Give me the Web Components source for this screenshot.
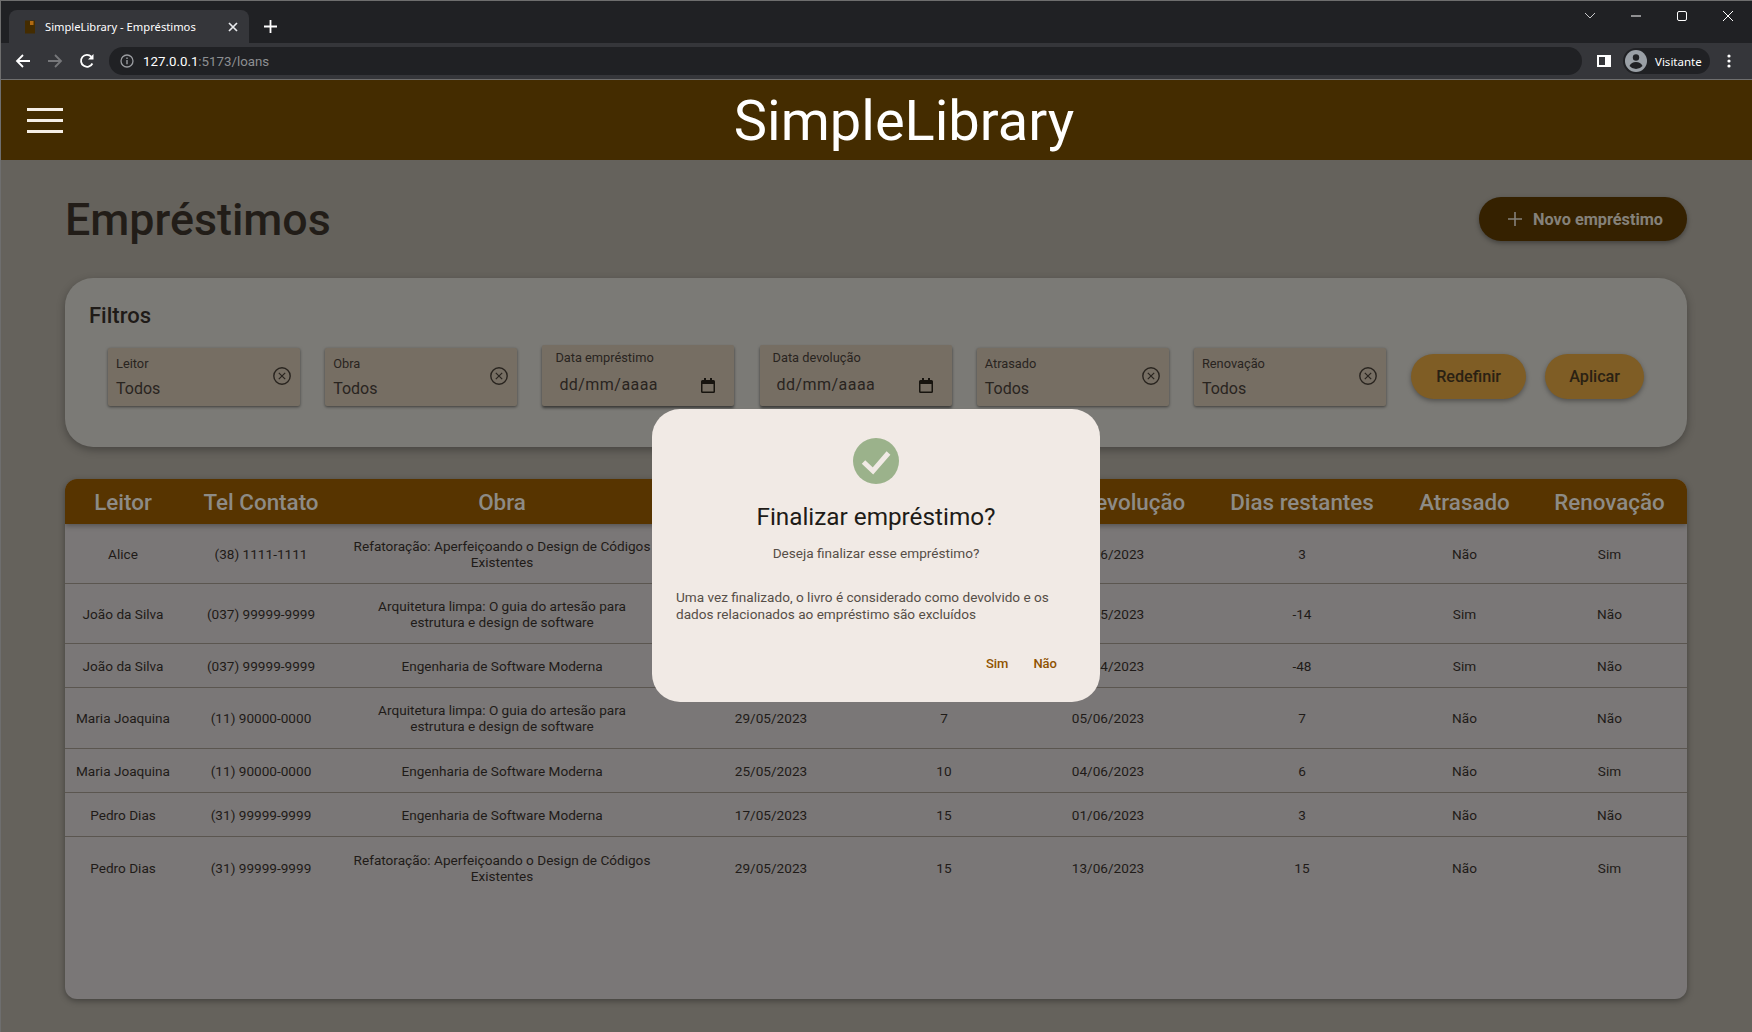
<!DOCTYPE html>
<html lang="pt-BR">
<head>
<meta charset="utf-8">
<title>SimpleLibrary - Empréstimos</title>
<style>
  html, body { margin: 0; height: 100%; }
  body { background: #65625c; font-family: Roboto, "Liberation Sans", sans-serif; overflow: hidden; }
  #app { display: flex; flex-direction: column; height: 1032px; position: relative; border-left: 1px solid #6e6e6e; box-sizing: border-box; }
</style>
</head>
<body>
<div id="app">
  <browser-chrome></browser-chrome>
  <app-header>SimpleLibrary</app-header>
  <loans-page>
    <page-heading slot="heading">Empréstimos</page-heading>
    <pill-button slot="action" kind="primary"><svg slot="icon" width="16" height="16" viewBox="0 0 16 16"><path d="M8 1v14M1 8h14" stroke="#85817a" stroke-width="1.6" fill="none"/></svg>Novo empréstimo</pill-button>
    <filter-card slot="filters">
      <filter-select label="Leitor"></filter-select>
      <filter-select label="Obra"></filter-select>
      <filter-date label="Data empréstimo"></filter-date>
      <filter-date label="Data devolução"></filter-date>
      <filter-select label="Atrasado"></filter-select>
      <filter-select label="Renovação"></filter-select>
      <div style="display:flex;gap:19px;margin-bottom:7px">
        <pill-button kind="tonal" style="width:115px">Redefinir</pill-button>
        <pill-button kind="tonal" style="width:99px">Aplicar</pill-button>
      </div>
    </filter-card>
    <loans-table slot="table"></loans-table>
  </loans-page>
  <confirm-dialog heading="Finalizar empréstimo?" subtitle="Deseja finalizar esse empréstimo?">
    Uma vez finalizado, o livro é considerado como devolvido e os dados relacionados ao empréstimo são excluídos
  </confirm-dialog>
</div>

<script>
class BrowserChrome extends HTMLElement {
    constructor() {
        super();
        this.attachShadow({mode: 'open'});
    }

    connectedCallback() {
        this.shadowRoot.innerHTML = `
        <style>
            :host { display: block; font-family: "Open Sans", "Liberation Sans", sans-serif; color: #fff; flex: none; }
            .strip { height: 42px; background: #202124; border-top: 1px solid #6e6e6e; box-sizing: content-box; display: flex; align-items: flex-end; position: relative; }
            .tab { margin-left: 8px; width: 240px; height: 33px; background: #35363a; border-radius: 8px 8px 0 0; display: flex; align-items: center; box-sizing: border-box; padding-left: 15px; }
            .tab svg.fav { flex: none; }
            .tab .title { margin-left: 9px; font-size: 11.2px; white-space: nowrap; flex: 1; font-family: "Noto Sans", sans-serif; }
            .tab .close { margin-right: 11px; flex: none; }
            .newtab { margin: 0 0 10px 15px; flex: none; }
            .controls { margin-left: auto; margin-right: 1px; align-self: stretch; display: flex; align-items: flex-start; padding-top: 7px; }
            .controls span { width: 46px; height: 16px; display: flex; justify-content: center; }
            .bar { height: 36px; background: #35363a; display: flex; align-items: center; border-bottom: 1px solid #6e6e6e; }
            .nav { width: 32px; display: flex; justify-content: center; flex: none; }
            .omni { margin-left: 6px; width: 1473px; height: 28px; background: #202124; border-radius: 14px; display: flex; align-items: center; padding-left: 11px; box-sizing: border-box; flex: none; }
            .url { margin-left: 9px; font: 13.3px Roboto, sans-serif; color: #8d8f92; }
            .url b { font-weight: 400; color: #fff; }
            .side { margin-left: 15px; flex: none; display: flex; }
            .profile { margin-left: 12px; width: 87px; height: 26px; background: #202124; border-radius: 13px; display: flex; align-items: center; padding-left: 2px; box-sizing: border-box; flex: none; }
            .profile span { margin-left: 8px; font-size: 11.5px; font-family: "Noto Sans", sans-serif; }
            .dots { margin-left: 17px; flex: none; display: flex; }
        </style>
        <div class="strip">
            <div class="tab">
                <svg class="fav" width="12" height="14" viewBox="0 0 12 14"><rect x="1" y="0.5" width="10" height="13" fill="#442c00"/><rect x="6" y="1" width="3.5" height="4" fill="#b06a12"/></svg>
                <div class="title">SimpleLibrary - Empréstimos</div>
                <svg class="close" width="10" height="10" viewBox="0 0 10 10"><path d="M1 1l8 8M9 1l-8 8" stroke="#e8eaed" stroke-width="1.7"/></svg>
            </div>
            <svg class="newtab" width="13" height="13" viewBox="0 0 13 13"><path d="M6.5 0v13M0 6.5h13" stroke="#fff" stroke-width="1.8"/></svg>
            <div class="controls">
                <span><svg width="12" height="16" viewBox="0 0 12 16"><path d="M1 5l5 5 5-5" stroke="#c8c9cb" fill="none"/></svg></span>
                <span><svg width="12" height="16" viewBox="0 0 12 16"><path d="M1 8h10" stroke="#fff" stroke-width="1"/></svg></span>
                <span><svg width="12" height="16" viewBox="0 0 12 16"><rect x="1.5" y="3.5" width="9" height="9" rx="1.5" fill="none" stroke="#fff"/></svg></span>
                <span><svg width="12" height="16" viewBox="0 0 12 16"><path d="M1 3l10 10M11 3L1 13" stroke="#fff"/></svg></span>
            </div>
        </div>
        <div class="bar">
            <div class="nav" style="margin-left:6px"><svg width="16" height="16" viewBox="0 0 16 16"><path d="M15 8H2M8 2L2 8l6 6" fill="none" stroke="#fff" stroke-width="1.8"/></svg></div>
            <div class="nav"><svg width="16" height="16" viewBox="0 0 16 16"><path d="M1 8h13M8 2l6 6-6 6" fill="none" stroke="#76777a" stroke-width="1.8"/></svg></div>
            <div class="nav"><svg width="16" height="16" viewBox="0 0 16 16"><path d="M13.4 10.5A6 6 0 1 1 12.3 3.6" fill="none" stroke="#fff" stroke-width="1.8"/><path d="M14.5 1v5.5H9z" fill="#fff"/></svg></div>
            <div class="omni">
                <svg width="14" height="14" viewBox="0 0 14 14"><circle cx="7" cy="7" r="6" fill="none" stroke="#9a9ca0" stroke-width="1.3"/><path d="M7 6v4.2M7 3.6v1.4" stroke="#9a9ca0" stroke-width="1.4"/></svg>
                <div class="url"><b>127.0.0.1</b>:5173/loans</div>
            </div>
            <div class="side"><svg width="14" height="12" viewBox="0 0 14 12"><rect width="14" height="12" fill="#fff"/><rect x="2" y="2" width="6" height="8" fill="#35363a"/></svg></div>
            <div class="profile">
                <svg width="22" height="22" viewBox="0 0 22 22"><circle cx="11" cy="11" r="11" fill="#9aa0a6"/><circle cx="11" cy="7.5" r="3.2" fill="#202124"/><path d="M4.5 16c1-2.6 3.6-4 6.5-4s5.500 1.400 6.500 4a8.500 8.500 0 0 1-13 0z" fill="#202124"/></svg>
                <span>Visitante</span>
            </div>
            <div class="dots"><svg width="4" height="14" viewBox="0 0 4 14"><circle cx="2" cy="2" r="1.6" fill="#fff"/><circle cx="2" cy="7" r="1.6" fill="#fff"/><circle cx="2" cy="12" r="1.6" fill="#fff"/></svg></div>
        </div>
        `;
    }
}

class AppHeader extends HTMLElement {
    constructor() {
        super();
        this.attachShadow({mode: 'open'});
    }

    connectedCallback() {
        this.shadowRoot.innerHTML = `
        <style>
            :host { display: flex; flex: none; height: 80px; background: #442c00; align-items: center; color: #fff; }
            .menu { margin-left: 26px; width: 36px; display: flex; flex-direction: column; gap: 8px; flex: none; }
            .menu i { display: block; height: 3px; background: #f6efe6; }
            h1 { flex: 1; margin: 0; padding: 2px 7px 0 0; text-align: center; font: 400 56px/78px Roboto, sans-serif; }
        </style>
        <div class="menu"><i></i><i></i><i></i></div>
        <h1><slot></slot></h1>
        `;
    }
}

class LoansPage extends HTMLElement {
    constructor() {
        super();
        this.attachShadow({mode: 'open'});
    }

    connectedCallback() {
        this.shadowRoot.innerHTML = `
        <style>
            :host { display: flex; flex-direction: column; flex: 1; min-height: 0; padding: 37px 65px 33px 64px; box-sizing: border-box; }
            .top { display: flex; justify-content: space-between; align-items: center; height: 44px; margin-bottom: 37px; }
            ::slotted(filter-card) { margin-bottom: 32px; }
            ::slotted(loans-table) { flex: 1; min-height: 0; }
        </style>
        <div class="top"><slot name="heading"></slot><slot name="action"></slot></div>
        <slot name="filters"></slot>
        <slot name="table"></slot>
        `;
    }
}

class PageHeading extends HTMLElement {
    constructor() {
        super();
        this.attachShadow({mode: 'open'});
    }

    connectedCallback() {
        this.shadowRoot.innerHTML = `
        <style>
            :host { display: block; }
            h2 { margin: 0; padding-top: 2px; font: 500 44.8px/52px Roboto, sans-serif; color: #221d18; }
        </style>
        <h2><slot></slot></h2>
        `;
    }
}

class PillButton extends HTMLElement {
    constructor() {
        super();
        this.attachShadow({mode: 'open'});
    }

    connectedCallback() {
        const primary = this.getAttribute('kind') === 'primary';
        this.shadowRoot.innerHTML = `
        <style>
            :host { display: inline-flex; flex: none; box-sizing: border-box; align-items: center; justify-content: center;
                    border-radius: 23px; font: ${primary ? '700 16.3px' : '500 16.2px'} Roboto, sans-serif;
                    height: ${primary ? 44 : 45}px; width: ${primary ? '208px' : 'auto'}; padding-left: ${primary ? 4 : 0}px;
                    background: ${primary ? '#352100' : '#7f5d25'}; color: ${primary ? '#85817a' : '#2a2113'};
                    box-shadow: 0 2px 5px rgba(0,0,0,.35); }
            ::slotted(svg) { margin-right: 10px; }
        </style>
        <slot name="icon"></slot><slot></slot>
        `;
    }
}

class FilterCard extends HTMLElement {
    constructor() {
        super();
        this.attachShadow({mode: 'open'});
    }

    connectedCallback() {
        this.shadowRoot.innerHTML = `
        <style>
            :host { display: block; flex: none; height: 169px; box-sizing: border-box; background: #7b7a76; border-radius: 28px;
                    padding: 23px 24px 0; box-shadow: 0 3px 8px rgba(0,0,0,.3); }
            h3 { margin: 0; font: 500 22px/30px Roboto, sans-serif; color: #1f1b18; }
            .row { display: flex; align-items: flex-end; gap: 25.2px; margin: 14px 0 0 19px; height: 61px; }
        </style>
        <h3>Filtros</h3>
        <div class="row"><slot></slot></div>
        `;
    }
}

class FilterSelect extends HTMLElement {
    constructor() {
        super();
        this.attachShadow({mode: 'open'});
    }

    connectedCallback() {
        this.shadowRoot.innerHTML = `
        <style>
            :host { display: flex; flex: none; width: 192px; height: 58px; box-sizing: border-box; background: #766e63; align-items: flex-start;
                    padding-left: 8px; box-shadow: 0 1px 3px rgba(0,0,0,.5); border-radius: 2px; position: relative; }
            .txt { flex: 1; }
            label { display: block; margin-top: 8px; font: 12.8px/15px Roboto, sans-serif; color: #29241f; }
            .val { margin-top: 8px; font: 16px/19px Roboto, sans-serif; color: #29241f; }
            svg { margin: 18px 8px 0 0; flex: none; }
        </style>
        <div class="txt">
            <label>${this.getAttribute('label')}</label>
            <div class="val">Todos</div>
        </div>
        <svg width="20" height="20" viewBox="0 0 20 20"><circle cx="10" cy="10" r="8.200" fill="none" stroke="#29241f" stroke-width="1.400"/><path d="M6.800 6.800l6.400 6.400M13.200 6.800l-6.400 6.400" stroke="#29241f" stroke-width="1.200"/></svg>
        `;
    }
}

class FilterDate extends HTMLElement {
    constructor() {
        super();
        this.attachShadow({mode: 'open'});
    }

    connectedCallback() {
        this.shadowRoot.innerHTML = `
        <style>
            :host { display: block; flex: none; width: 192px; height: 61px; box-sizing: border-box; background: #766e63;
                    padding: 5px 0 0 13px; box-shadow: 0 2px 3px rgba(0,0,0,.55); border-radius: 2px; }
            label { display: block; font: 12.8px/15px Roboto, sans-serif; color: #29241f; }
            .val { display: flex; align-items: center; margin-top: 8px; padding-left: 4px; height: 24px; }
            span { font: 16px/24px Roboto, sans-serif; color: #29241f; letter-spacing: .45px; flex: 1; }
            svg { margin-right: 19px; flex: none; }
        </style>
        <label>${this.getAttribute('label')}</label>
        <div class="val"><span>dd/mm/aaaa</span>
            <svg width="14" height="15" viewBox="0 0 14 15"><path d="M3 0h2v2h4V0h2v2h1.500A1.500 1.500 0 0 1 14 3.500v10a1.500 1.500 0 0 1-1.500 1.500h-11A1.500 1.500 0 0 1 0 13.500v-10A1.500 1.500 0 0 1 1.500 2H3zM1.500 6v7.500h11V6z" fill="#17140f"/></svg>
        </div>
        `;
    }
}

const LOAN_COLUMNS = ['Leitor', 'Tel Contato', 'Obra', 'Data empréstimo', 'Prazo', 'Data devolução', 'Dias restantes', 'Atrasado', 'Renovação'];
const REFATORACAO = 'Refatoração: Aperfeiçoando o Design de Códigos Existentes';
const ARQUITETURA = 'Arquitetura limpa: O guia do artesão para estrutura e design de software';
const ENGENHARIA = 'Engenharia de Software Moderna';
const LOAN_ROWS = [
    {h: 60, cells: ['Alice', '(38) 1111-1111', REFATORACAO, '25/05/2023', '7', '01/06/2023', '3', 'Não', 'Sim']},
    {h: 60, cells: ['João da Silva', '(037) 99999-9999', ARQUITETURA, '01/05/2023', '14', '15/05/2023', '-14', 'Sim', 'Não']},
    {h: 44, cells: ['João da Silva', '(037) 99999-9999', ENGENHARIA, '04/04/2023', '7', '11/04/2023', '-48', 'Sim', 'Não']},
    {h: 61, cells: ['Maria Joaquina', '(11) 90000-0000', ARQUITETURA, '29/05/2023', '7', '05/06/2023', '7', 'Não', 'Não']},
    {h: 44, cells: ['Maria Joaquina', '(11) 90000-0000', ENGENHARIA, '25/05/2023', '10', '04/06/2023', '6', 'Não', 'Sim']},
    {h: 44, cells: ['Pedro Dias', '(31) 99999-9999', ENGENHARIA, '17/05/2023', '15', '01/06/2023', '3', 'Não', 'Não']},
    {h: 62, cells: ['Pedro Dias', '(31) 99999-9999', REFATORACAO, '29/05/2023', '15', '13/06/2023', '15', 'Não', 'Sim']},
];

class LoansTable extends HTMLElement {
    constructor() {
        super();
        this.attachShadow({mode: 'open'});
    }

    connectedCallback() {
        const row = r => `<div class="row" style="height:${r.h}px">${r.cells.map(c => `<div>${c}</div>`).join('')}</div>`;
        this.shadowRoot.innerHTML = `
        <style>
            :host { display: block; background: #7a7777; border-radius: 12px; overflow: hidden; box-shadow: 0 2px 6px rgba(0,0,0,.35); }
            .head, .row { display: grid; grid-template-columns: 116px 160px 322px 216px 130px 198px 190px 135px 155px; align-items: center; text-align: center; }
            .head { position: relative; height: 45px; background: #573400; color: #8d8b86; font: 500 22.4px Roboto, sans-serif; box-shadow: 0 2px 5px rgba(0,0,0,.3); white-space: nowrap; }
            .head div { margin: 0 -10px; }
            .row { box-sizing: border-box; color: #1f1b18; font: 13.6px/16px Roboto, sans-serif; border-bottom: 1px solid #5b5650; }
            .row:last-child { border-bottom: 0; }
            .row div { padding: 0 11px; }
        </style>
        <div class="head">${LOAN_COLUMNS.map(c => `<div>${c}</div>`).join('')}</div>
        ${LOAN_ROWS.map(row).join('')}
        `;
    }
}

class ConfirmDialog extends HTMLElement {
    constructor() {
        super();
        this.attachShadow({mode: 'open'});
    }

    connectedCallback() {
        this.shadowRoot.innerHTML = `
        <style>
            :host { position: absolute; left: -1px; right: 0; top: 80px; bottom: 1px; display: flex; align-items: center; justify-content: center; }
            .box { width: 448px; height: 293px; box-sizing: border-box; background: #f1eae5; border-radius: 28px; padding: 29px 24px 0; display: flex; flex-direction: column; }
            svg { align-self: center; flex: none; }
            h2 { margin: 17px 0 0; text-align: center; font: 400 24.3px/32px Roboto, sans-serif; color: #201b17; }
            p { margin: 10px 0 0; text-align: center; font: 13.6px/20px Roboto, sans-serif; color: #564e47; }
            .body { margin-top: 26px; font: 13.6px/17px Roboto, sans-serif; color: #564e47; }
            .actions { display: flex; justify-content: flex-end; gap: 25px; margin: 31px 19px 0 0; font: 500 13px/20px Roboto, sans-serif; color: #8f5200; }
        </style>
        <div class="box">
            <svg width="46" height="46" viewBox="0 0 46 46"><circle cx="23" cy="23" r="23" fill="#9bb28b"/><path d="M10.500 24l9.500 9 15.500-18" fill="none" stroke="#f1eae5" stroke-width="5"/></svg>
            <h2>${this.getAttribute('heading')}</h2>
            <p>${this.getAttribute('subtitle')}</p>
            <div class="body"><slot></slot></div>
            <div class="actions"><span>Sim</span><span>Não</span></div>
        </div>
        `;
    }
}

customElements.define('browser-chrome', BrowserChrome);
customElements.define('app-header', AppHeader);
customElements.define('loans-page', LoansPage);
customElements.define('page-heading', PageHeading);
customElements.define('pill-button', PillButton);
customElements.define('filter-card', FilterCard);
customElements.define('filter-select', FilterSelect);
customElements.define('filter-date', FilterDate);
customElements.define('loans-table', LoansTable);
customElements.define('confirm-dialog', ConfirmDialog);
</script>
</body>
</html>
